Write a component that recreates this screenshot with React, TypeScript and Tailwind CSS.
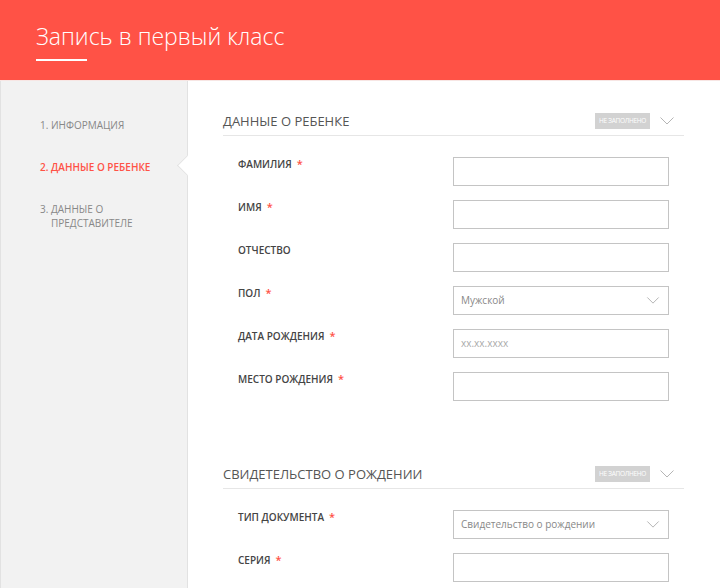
import React from 'react';

const Chevron = ({ className }: { className?: string }) => (
  <svg viewBox="0 0 14 8" className={className} fill="none" stroke="currentColor" strokeWidth="1">
    <path d="M0.5 0.5 L7 7 L13.5 0.5" />
  </svg>
);

type Field = { label: string; required?: boolean; kind?: 'text' | 'select'; value?: string; placeholder?: string };

const childFields: Field[] = [
  { label: 'Фамилия', required: true },
  { label: 'Имя', required: true },
  { label: 'Отчество' },
  { label: 'Пол', required: true, kind: 'select', value: 'Мужской' },
  { label: 'Дата рождения', required: true, placeholder: 'xx.xx.xxxx' },
  { label: 'Место рождения', required: true },
];

const certFields: Field[] = [
  { label: 'Тип документа', required: true, kind: 'select', value: 'Свидетельство о рождении' },
  { label: 'Серия', required: true },
];

function SectionHeader({ title }: { title: string }) {
  return (
    <div className="flex items-center justify-between border-b border-[#e6e6e6] pb-[4px]">
      <h2 className="text-[13px] leading-[20px] text-[#555] uppercase">{title}</h2>
      <div className="flex items-center gap-[10px] pr-[10px]">
        <span className="bg-[#d2d2d2] text-white text-[6.5px] leading-[16px] px-[4px] uppercase tracking-[-0.3px]">
          Не заполнено
        </span>
        <Chevron className="w-[14px] h-[8px] text-[#b5b5b5]" />
      </div>
    </div>
  );
}

function FieldRow({ field }: { field: Field }) {
  return (
    <div className="flex items-start">
      <label className="flex-1 text-[10px] leading-[14px] font-semibold text-[#444] uppercase">
        {field.label}
        {field.required && <span className="text-[#ff5246] text-[11px] ml-[5px]">*</span>}
      </label>
      <div className="w-[216px] h-[29px] border border-[#c4c4c4] flex items-center justify-between px-[7px]">
        {field.value && <span className="text-[10px] text-[#888]">{field.value}</span>}
        {field.placeholder && <span className="text-[10px] text-[#aaa]">{field.placeholder}</span>}
        {field.kind === 'select' && <Chevron className="w-[14px] h-[7px] text-[#aaa] mr-[1px]" />}
      </div>
    </div>
  );
}

export default function App() {
  return (
    <div className="w-[720px] h-[588px] overflow-hidden bg-white font-['Open_Sans',sans-serif]">
      <header className="h-[80px] bg-[#ff5246] px-[36px] pt-[20px]">
        <h1 className="text-white text-[23px] leading-[32px] font-light">Запись в первый класс</h1>
        <div className="w-[51px] h-[2px] bg-white mt-[7px]" />
      </header>
      <div className="flex h-[508px] border-t border-[#f7e6e4]">
        <aside className="relative w-[188px] shrink-0 bg-[#f2f2f2] border-l border-[#c9ac6e] border-r border-[#e2e2e2] pl-[39px] pt-[37px]">
          <ul className="text-[10px] leading-[14px] uppercase text-[#888] space-y-[28px]">
            <li>1. Информация</li>
            <li className="text-[#ff5246] font-semibold">2. Данные о ребенке</li>
            <li>
              3. Данные о
              <br />
              <span className="pl-[11px]">Представителе</span>
            </li>
          </ul>
          <div className="absolute right-[-8px] top-[77px] w-[15px] h-[15px] bg-white border-l border-b border-[#e2e2e2] rotate-45" />
        </aside>
        <main className="flex-1 pl-[35px] pr-[36px] pt-[30px]">
          <section>
            <SectionHeader title="Данные о ребенке" />
            <div className="px-[15px] pt-[21px] space-y-[14px]">
              {childFields.map((f) => (
                <FieldRow key={f.label} field={f} />
              ))}
            </div>
          </section>
          <section className="mt-[63px]">
            <SectionHeader title="Свидетельство о рождении" />
            <div className="px-[15px] pt-[21px] space-y-[14px]">
              {certFields.map((f) => (
                <FieldRow key={f.label} field={f} />
              ))}
            </div>
          </section>
        </main>
      </div>
    </div>
  );
}
